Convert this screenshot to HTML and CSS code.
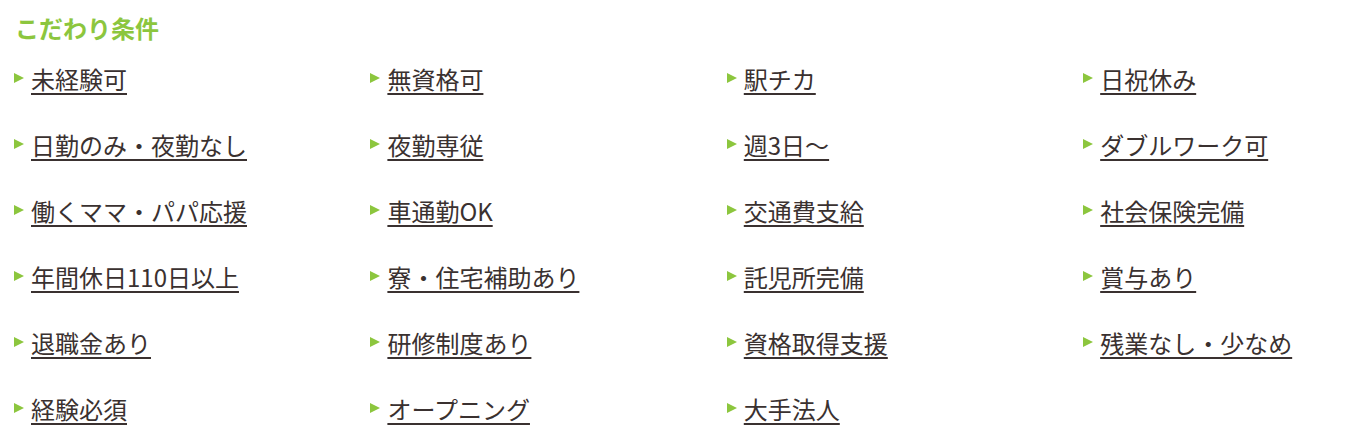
FILE: index.html
```html
<!DOCTYPE html>
<html lang="ja">
<head>
  <meta charset="UTF-8" />
  <meta name="viewport" content="width=device-width, initial-scale=1.0"/>
  <title>こだわり条件</title>
  <link rel="stylesheet" href="styles.css">
</head>
<body>
  <section class="conditions">
    <h2 class="conditions-title">こだわり条件</h2>
    <ul class="condition-list">
      <li><a href="#">未経験可</a></li>
      <li><a href="#">無資格可</a></li>
      <li><a href="#">駅チカ</a></li>
      <li><a href="#">日祝休み</a></li>
      <li><a href="#">日勤のみ・夜勤なし</a></li>
      <li><a href="#">夜勤専従</a></li>
      <li><a href="#">週3日〜</a></li>
      <li><a href="#">ダブルワーク可</a></li>
      <li><a href="#">働くママ・パパ応援</a></li>
      <li><a href="#">車通勤OK</a></li>
      <li><a href="#">交通費支給</a></li>
      <li><a href="#">社会保険完備</a></li>
      <li><a href="#">年間休日110日以上</a></li>
      <li><a href="#">寮・住宅補助あり</a></li>
      <li><a href="#">託児所完備</a></li>
      <li><a href="#">賞与あり</a></li>
      <li><a href="#">退職金あり</a></li>
      <li><a href="#">研修制度あり</a></li>
      <li><a href="#">資格取得支援</a></li>
      <li><a href="#">残業なし・少なめ</a></li>
      <li><a href="#">経験必須</a></li>
      <li><a href="#">オープニング</a></li>
      <li><a href="#">大手法人</a></li>
    </ul>
  </section>
</body>
</html>
```

FILE: styles.css
```css
* {
  box-sizing: border-box;
}

body {
  margin: 0;
  background: #ffffff;
  font-family: "Noto Sans CJK JP", "Noto Sans", sans-serif;
  color: #3a3130;
}

.conditions {
  padding: 10px 0 0 14px;
}

.conditions-title {
  margin: 0;
  font-size: 24px;
  font-weight: 700;
  line-height: 36px;
  color: #8cc63e;
  padding-left: 1px;
}

.condition-list {
  list-style: none;
  margin: 0;
  padding: 0;
  display: grid;
  grid-template-columns: repeat(3, 356.4px) 1fr;
  grid-auto-rows: 66px;
}

.condition-list li {
  display: flex;
  align-items: center;
  gap: 7px;
}

/* green arrow in front of each link */
.condition-list li::before {
  content: "";
  flex: none;
  width: 0;
  height: 0;
  border-style: solid;
  border-width: 5.5px 0 5.5px 10px;
  border-color: transparent transparent transparent #8cc63e;
  margin-top: -2px;
}

.condition-list a {
  font-size: 24px;
  font-weight: 400;
  line-height: 30px;
  color: #3a3130;
  text-decoration: underline;
  text-decoration-thickness: 2px;
  text-underline-offset: 4px;
}
```
